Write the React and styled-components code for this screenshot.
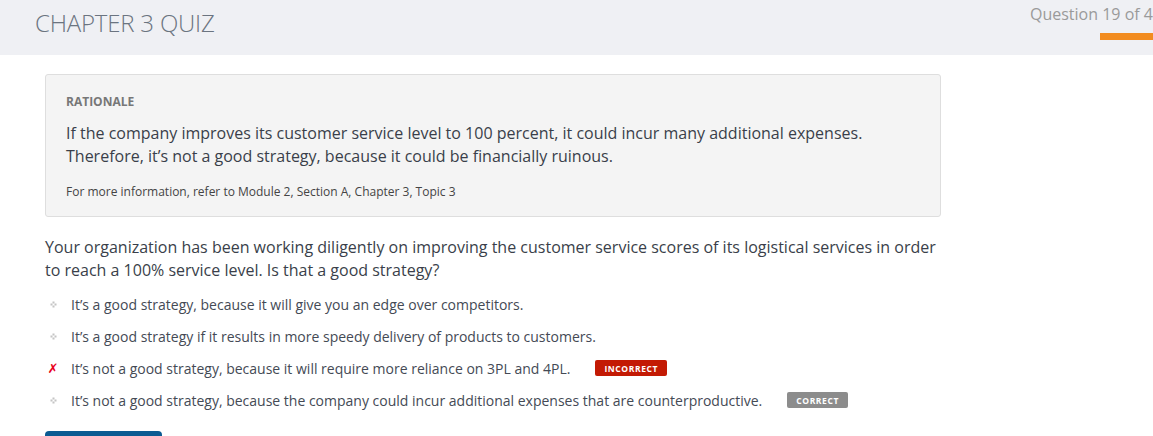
import styled, { createGlobalStyle } from "styled-components";

const GlobalStyle = createGlobalStyle`
  html, body {
    margin: 0;
    padding: 0;
    overflow: hidden;
    background: #ffffff;
    font-family: "Open Sans", "Noto Sans", sans-serif;
  }
`;

const options = [
  { text: "It’s a good strategy, because it will give you an edge over competitors." },
  { text: "It’s a good strategy if it results in more speedy delivery of products to customers." },
  {
    text: "It’s not a good strategy, because it will require more reliance on 3PL and 4PL.",
    wrong: true,
    badge: "INCORRECT",
  },
  {
    text: "It’s not a good strategy, because the company could incur additional expenses that are counterproductive.",
    badge: "CORRECT",
  },
];

function Bullet() {
  return (
    <svg width="7" height="7" viewBox="0 0 7 7">
      <rect x="2.5" y="0.5" width="2" height="2" fill="#c4c4c4" />
      <rect x="0.5" y="2.5" width="2" height="2" fill="#c4c4c4" />
      <rect x="4.5" y="2.5" width="2" height="2" fill="#c4c4c4" />
      <rect x="2.5" y="4.5" width="2" height="2" fill="#c4c4c4" />
    </svg>
  );
}

export default function App() {
  return (
    <Page>
      <GlobalStyle />
      <Header>
        <Title>CHAPTER 3 QUIZ</Title>
        <Progress>
          <Counter>Question 19 of 40</Counter>
          <Bar />
        </Progress>
      </Header>

      <Content>
        <Rationale>
          <Label>RATIONALE</Label>
          <RationaleText>
            If the company improves its customer service level to 100 percent, it could incur many
            additional expenses.
            <br />
            Therefore, it’s not a good strategy, because it could be financially ruinous.
          </RationaleText>
          <Reference>For more information, refer to Module 2, Section A, Chapter 3, Topic 3</Reference>
        </Rationale>

        <Question>
          Your organization has been working diligently on improving the customer service scores of
          its logistical services in order to reach a 100% service level. Is that a good strategy?
        </Question>

        <Options>
          {options.map((o) => (
            <Option key={o.text}>
              <Marker>{o.wrong ? <Cross>✗</Cross> : <Bullet />}</Marker>
              <OptionText>{o.text}</OptionText>
              {o.badge && <Badge $correct={o.badge === "CORRECT"}>{o.badge}</Badge>}
            </Option>
          ))}
        </Options>

        <NextButton />
      </Content>
    </Page>
  );
}

const Page = styled.div`
  width: 1153px;
  height: 436px;
  overflow: hidden;
`;

const Header = styled.div`
  display: flex;
  justify-content: space-between;
  height: 55px;
  background: #eff0f4;
  padding-left: 35px;
`;

const Title = styled.h1`
  margin: 6px 0 0;
  font-size: 24px;
  font-weight: 300;
  color: #6b7480;
  letter-spacing: -0.2px;
`;

const Progress = styled.div`
  display: flex;
  flex-direction: column;
  width: 153px;
  margin-right: -30px;
  padding-top: 3px;
  flex-shrink: 0;
`;

const Counter = styled.div`
  font-size: 16px;
  color: #9a9a9a;
  white-space: nowrap;
`;

const Bar = styled.div`
  margin: 8px 0 0 70px;
  height: 7px;
  background: #f28c1f;
`;

const Content = styled.div`
  display: flex;
  flex-direction: column;
  align-items: flex-start;
  padding: 19px 0 0 45px;
  width: 896px;
`;

const Rationale = styled.div`
  box-sizing: border-box;
  width: 896px;
  height: 143px;
  background: #f4f4f4;
  border: 1px solid #dedede;
  border-radius: 3px;
  padding: 18px 20px 0;
`;

const Label = styled.div`
  font-size: 12px;
  font-weight: 700;
  color: #777;
`;

const RationaleText = styled.p`
  margin: 12px 0 0;
  font-size: 16px;
  line-height: 23px;
  color: #3a3f4a;
`;

const Reference = styled.div`
  margin-top: 15px;
  font-size: 12px;
  color: #444;
`;

const Question = styled.p`
  margin: 19px 0 0;
  font-size: 16px;
  line-height: 23px;
  color: #3a3f4a;
`;

const Options = styled.ul`
  list-style: none;
  margin: 6px 0 0;
  padding: 0;
`;

const Option = styled.li`
  display: flex;
  align-items: center;
  height: 32px;
`;

const Marker = styled.span`
  display: flex;
  justify-content: center;
  width: 16px;
  margin-right: 10px;
`;

const Cross = styled.span`
  color: #e8001c;
  font-size: 13px;
  font-weight: 700;
  font-style: italic;
  font-family: "DejaVu Sans", sans-serif;
`;

const OptionText = styled.span`
  font-size: 14px;
  color: #444a55;
`;

const Badge = styled.span`
  margin-left: 25px;
  padding: 4px 9px 3px;
  border-radius: 2px;
  font-size: 8.5px;
  line-height: 9px;
  font-weight: 700;
  letter-spacing: 0.6px;
  color: #fff;
  background: ${(p) => (p.$correct ? "#8c8c8c" : "#c31a04")};
`;

const NextButton = styled.div`
  margin-top: 15px;
  width: 117px;
  height: 20px;
  border-radius: 4px;
  background: #0b5b92;
`;
